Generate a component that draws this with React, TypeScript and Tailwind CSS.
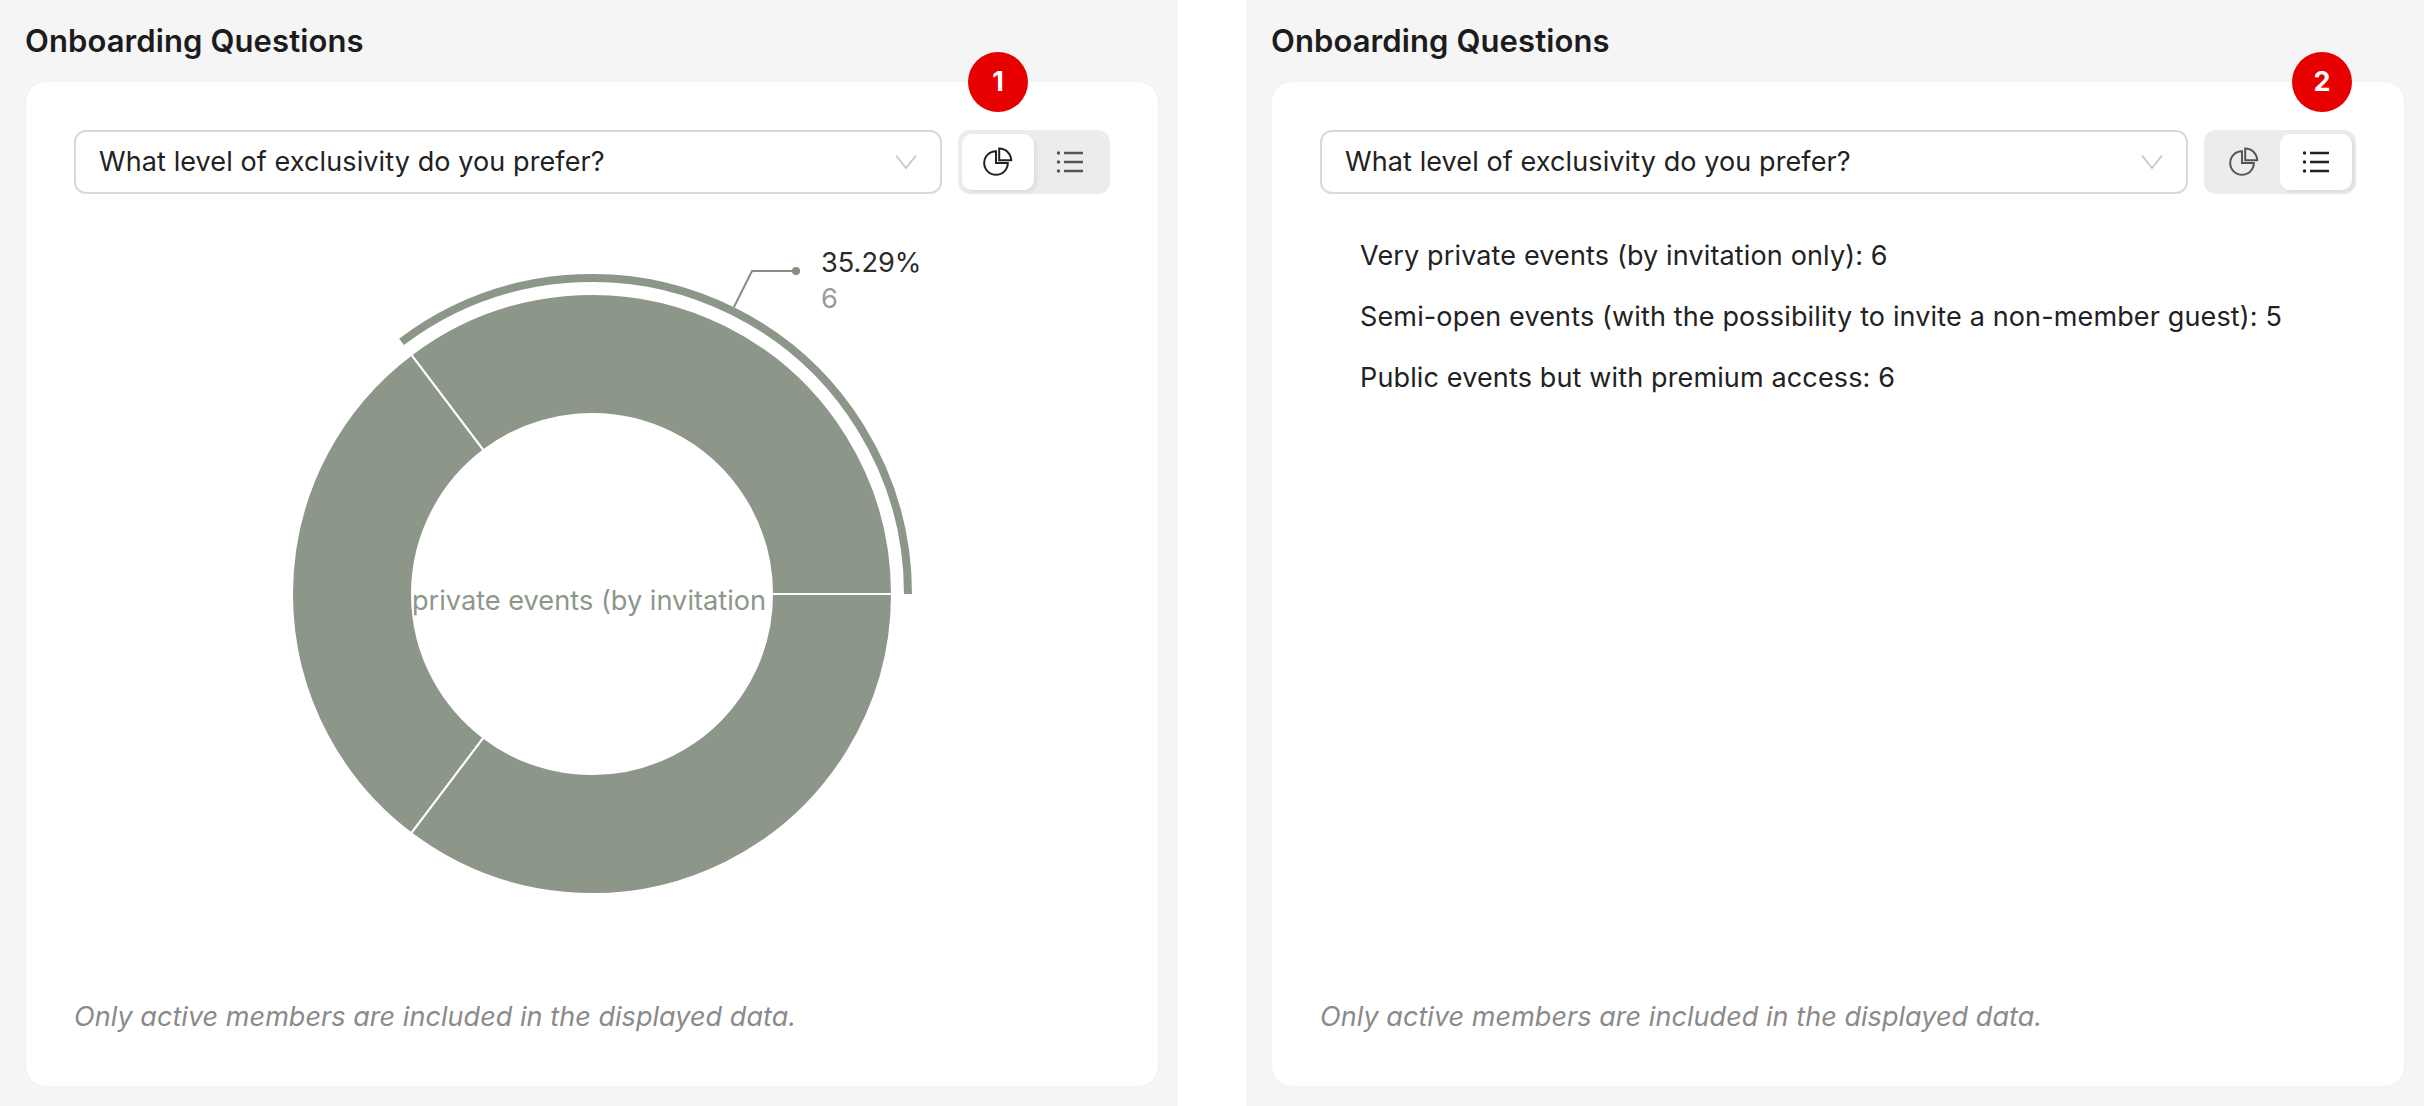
import React from "react";

const G = "#8d9789";

function PieIcon({ color }: { color: string }) {
  return (
    <svg width="30" height="30" viewBox="0 0 30 30" fill="none" stroke={color} strokeWidth="2">
      <path d="M13 4.2 A11.8 11.8 0 1 0 24.8 16 L13 16 Z" />
      <path d="M16.2 1.5 A12 12 0 0 1 28.2 13.3 L16.2 13.3 Z" />
    </svg>
  );
}

function ListIcon({ color }: { color: string }) {
  return (
    <svg width="28" height="24" viewBox="0 0 28 24" fill="none" stroke={color} strokeWidth="2.4">
      <path d="M8 3h19M8 12h19M8 21h19" />
      <circle cx="2.5" cy="3" r="1.7" fill={color} stroke="none" />
      <circle cx="2.5" cy="12" r="1.7" fill={color} stroke="none" />
      <circle cx="2.5" cy="21" r="1.7" fill={color} stroke="none" />
    </svg>
  );
}

function Toggle({ active, n }: { active: "pie" | "list"; n: string }) {
  const on = "w-[72px] h-14 flex items-center justify-center rounded-[10px] bg-white shadow-[2px_2px_4px_rgba(0,0,0,0.08)]";
  const off = "w-[72px] h-14 flex items-center justify-center";
  return (
    <div className="relative shrink-0 w-[152px] h-16 rounded-xl bg-[#ececec] p-1 flex gap-0">
      <div className={active === "pie" ? on : off}>
        <PieIcon color={active === "pie" ? "#222222" : "#555555"} />
      </div>
      <div className={active === "list" ? on : off}>
        <ListIcon color={active === "list" ? "#222222" : "#555555"} />
      </div>
      <div
        className={
          "absolute top-[-78px] w-[60px] h-[60px] rounded-full bg-[#e60000] text-white flex items-center justify-center text-[27px] font-bold " +
          (active === "pie" ? "left-[10px]" : "left-[88px]")
        }
      >
        {n}
      </div>
    </div>
  );
}

function Chevron() {
  return (
    <svg width="22" height="16" viewBox="0 0 22 16" fill="none" stroke="#c9c9c9" strokeWidth="2">
      <path d="M1 1.5 L11 14 L21 1.5" />
    </svg>
  );
}

function Donut() {
  const cx = 592 - 74;
  const cy = 594 - 194;
  const p = (r: number, deg: number) => {
    const a = (deg * Math.PI) / 180;
    return `${(cx + r * Math.cos(a)).toFixed(2)} ${(cy - r * Math.sin(a)).toFixed(2)}`;
  };
  const seg = (from: number, to: number) =>
    `M${p(300, from)} A300 300 0 0 0 ${p(300, to)} L${p(180, to)} A180 180 0 0 1 ${p(180, from)} Z`;
  return (
    <svg width="1036" height="730" viewBox="0 0 1036 730" className="block">
      <path d={seg(0, 127.06)} fill={G} stroke="#ffffff" strokeWidth="2" />
      <path d={seg(127.06, 232.94)} fill={G} stroke="#ffffff" strokeWidth="2" />
      <path d={seg(232.94, 360)} fill={G} stroke="#ffffff" strokeWidth="2" />
      <path d={`M${p(316, 0)} A316 316 0 0 0 ${p(316, 127.06)}`} fill="none" stroke={G} strokeWidth="8" />
      <path
        d={`M${734 - 74} ${307 - 194} L${752 - 74} ${271 - 194} L${796 - 74} ${271 - 194}`}
        fill="none"
        stroke="#868e82"
        strokeWidth="2"
      />
      <circle cx={796 - 74} cy={271 - 194} r="4" fill="#868e82" />
      <text x={821 - 74} y={272 - 194} fontSize="27.2" fill="#2b2b2b" fontFamily="Inter, sans-serif">
        35.29%
      </text>
      <text x={821 - 74} y={308 - 194} fontSize="27.2" fill="#9a9a9a" fontFamily="Inter, sans-serif">
        6
      </text>
      <text x={589 - 74} y={610 - 194} fontSize="27.2" fill={G} textAnchor="middle" fontFamily="Inter, sans-serif">
        private events (by invitation
      </text>
    </svg>
  );
}

function Panel({ n, active, className }: { n: string; active: "pie" | "list"; className: string }) {
  return (
    <section className={"h-[1106px] w-[1178px] shrink-0 bg-[#f5f5f5] flex flex-col pb-5 pt-[22px] " + className}>
      <h2 className="text-[31px] leading-[38px] tracking-[0.1px] font-semibold text-[#1c1c1c] h-[38px] mb-[22px] -ml-[1px]">
        Onboarding Questions
      </h2>
      <div className="flex-1 bg-white rounded-[20px] shadow-[0_0_2px_rgba(0,0,0,0.06)] flex flex-col px-12 pt-12 pb-[52px]">
        <div className="flex items-center gap-4">
          <div className="flex-1 h-16 rounded-xl border-2 border-[#d9d9d9] flex items-center justify-between pl-[23px] pr-[23px]">
            <span className="text-[27px] tracking-[0.1px] text-[#222222]">What level of exclusivity do you prefer?</span>
            <Chevron />
          </div>
          <Toggle active={active} n={n} />
        </div>
        <div className="flex-1 min-h-0">
          {active === "pie" ? (
            <Donut />
          ) : (
            <ul className="pl-[40px] pt-[42px] flex flex-col gap-[21px] text-[27px] tracking-[0.14px] leading-[40px] text-[#222222]">
              <li>Very private events (by invitation only): 6</li>
              <li>Semi-open events (with the possibility to invite a non-member guest): 5</li>
              <li>Public events but with premium access: 6</li>
            </ul>
          )}
        </div>
        <p className="text-[27px] tracking-[0.05px] leading-[34px] italic text-[#8a8a8a]">Only active members are included in the displayed data.</p>
      </div>
    </section>
  );
}

export default function App() {
  return (
    <div className="w-[2424px] h-[1106px] overflow-hidden bg-white flex gap-[68px] font-['Inter',sans-serif]">
      <Panel n="1" active="pie" className="pl-[26px] pr-5" />
      <Panel n="2" active="list" className="pl-[26px] pr-5" />
    </div>
  );
}
